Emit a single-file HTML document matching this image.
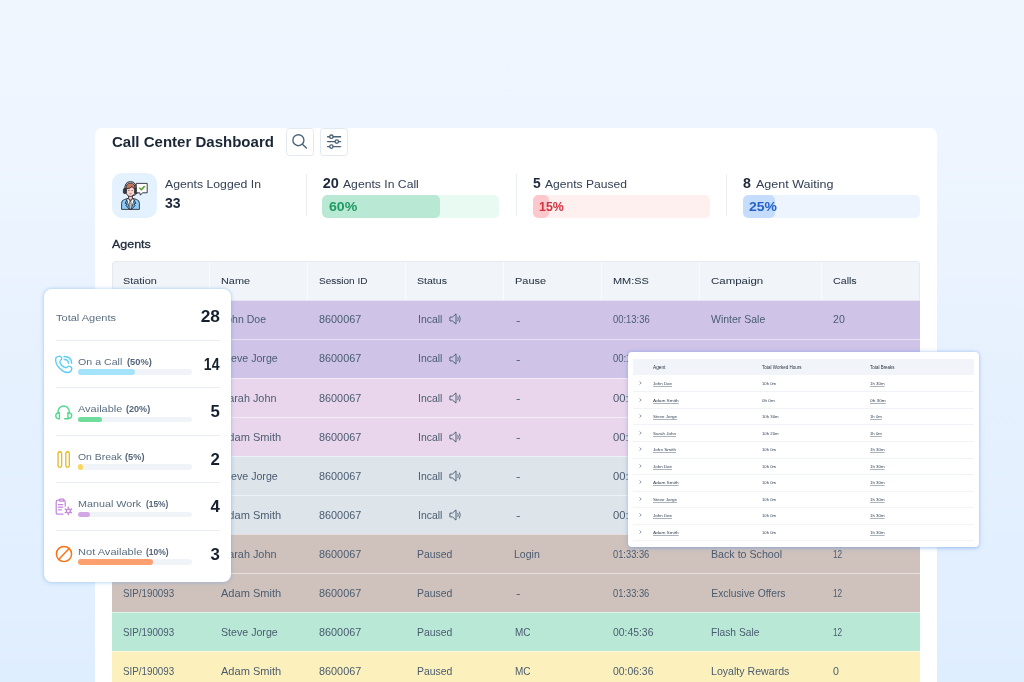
<!DOCTYPE html>
<html lang="en"><head><meta charset="utf-8"><title>Call Center Dashboard</title>
<style>
*{box-sizing:border-box;margin:0;padding:0}
html,body{width:1024px;height:682px;overflow:hidden}
body{font-family:"Liberation Sans",Arial,sans-serif;background:linear-gradient(180deg,#f0f6fe 0%,#eef5fe 22%,#e6f1fe 55%,#dfeefe 100%);position:relative}
.t{position:absolute;line-height:1;white-space:nowrap}
.abs{position:absolute}
#main{position:absolute;left:95px;top:128px;width:842.3px;height:600px;background:#fff;border-radius:7px 7px 0 0}
.btn{position:absolute;top:128px;width:28px;height:28px;border:1px solid #e3e9f0;border-radius:3.5px;background:#fff}
.vdiv{position:absolute;top:174px;width:1px;height:42px;background:#eaeef3}
.bar{position:absolute;top:195px;width:177px;height:22.5px;border-radius:5px;overflow:hidden}
.bar i{position:absolute;left:0;top:0;bottom:0;border-radius:5px}
#thead{position:absolute;left:112px;top:261px;width:808px;height:39px;background:#f1f5f9;border:1px solid #e5eaf1;border-bottom:none;border-radius:4px 4px 0 0}
.cs{position:absolute;top:262px;width:1.5px;height:38px;background:#fafcfe}
.row{position:absolute;left:112px;width:808px;height:40.5px;border-top:1.2px solid rgba(255,255,255,.5)}
#lcard{position:absolute;left:44px;top:289px;width:187px;height:292.8px;background:#fff;border-radius:7.5px;box-shadow:0 0 3.5px rgba(70,150,225,.42),0 1px 5px rgba(70,150,225,.12)}
.ld{position:absolute;left:56px;width:164px;height:1px;background:#e8edf3}
.pb{position:absolute;left:78px;width:114px;height:5.4px;border-radius:3px;background:#f0f4f8}
.pb i{position:absolute;left:0;top:0;bottom:0;border-radius:3px}
#pop{position:absolute;left:627.8px;top:352.3px;width:351.1px;height:194.6px;background:#fff;border-radius:4px;box-shadow:0 .5px 3.5px rgba(80,140,225,.45),0 1px 6px rgba(80,140,225,.1)}
.ph{position:absolute;left:633px;top:359px;width:341px;height:16px;background:#f1f5f9}
.pl{position:absolute;left:633px;width:341px;height:1px;background:#f0f3f7}
.u{text-decoration:underline;text-decoration-thickness:.5px;text-underline-offset:.5px;text-decoration-color:rgba(51,66,86,.4)}
#wrap{position:absolute;left:0;top:0;width:1024px;height:682px;overflow:hidden;will-change:transform}
</style></head><body><div id="wrap">

<div id="main"></div>
<div class="t" style="left:112.20px;top:134px;font-size:15.1px;color:#1c2736;font-weight:700;transform:scaleX(0.995);transform-origin:left center;">Call Center Dashboard</div>
<div class="btn" style="left:286px"><svg class="abs" style="left:.4px;top:.4px" width="26" height="26" viewBox="0 0 26 26" fill="none" stroke="#4a6274" stroke-width="1.35" stroke-linecap="round"><circle cx="11.4" cy="11.2" r="5.5"/><path d="M15.4 15.2 L19.4 19"/></svg></div>
<div class="btn" style="left:319.5px"><svg class="abs" style="left:0;top:.45px" width="26" height="26" viewBox="0 0 26 26" fill="none" stroke="#4a6274" stroke-width="1.35" stroke-linecap="round"><path d="M6.6 7.7H19.6M6.6 12.6H19.6M6.6 17.6H19.6"/><circle cx="10.4" cy="7.7" r="1.7" fill="#fff"/><circle cx="15.8" cy="12.6" r="1.7" fill="#fff"/><circle cx="10.4" cy="17.6" r="1.7" fill="#fff"/></svg></div>
<div class="abs" style="left:112px;top:172.8px;width:45px;height:45px;border-radius:10px;background:#e3f2fe"></div>
<svg class="abs" style="left:119px;top:179px" width="31" height="32" viewBox="0 0 31 32">
<g stroke="#2b2b33" stroke-width="0.9" stroke-linejoin="round" stroke-linecap="round">
<path d="M2.6 30 V24.2 Q2.6 21.2 5.6 20.4 L9.2 19.4 H13.8 L17.4 20.4 Q20.4 21.2 20.4 24.2 V30 Z" fill="#8ecbfb"/>
<path d="M9.2 19.4 L11.5 22.2 L13.8 19.4 L15.2 21 L12.4 30 H10.6 L7.8 21 Z" fill="#fff"/>
<path d="M11 22.4 H12 L12.5 30 H10.5 Z" fill="#cfd4da" stroke-width="0.6"/>
<path d="M7.6 21.2 L6.2 24.4 L8 25 L7 26.6 L10.2 30 M15.4 21.2 L16.8 24.4 L15 25 L16 26.6 L12.8 30" fill="#5eb3f6"/>
<path d="M9.6 16.2 V19.4 L11.5 21.4 L13.4 19.4 V16.2 Z" fill="#f7cdc4"/>
<path d="M7.2 9.4 Q7.2 5 11.5 5 Q15.8 5 15.8 9.4 V12.6 Q15.8 17.4 11.5 17.4 Q7.2 17.4 7.2 12.6 Z" fill="#fbd5cd"/>
<path d="M7 10 Q6.6 4 11.5 4 Q16.4 4 16 10 Q14 9.4 13.2 7.4 Q11.6 9.6 7 10 Z" fill="#c4775b"/>
<path d="M5.8 11 Q5.2 2.6 11.5 2.6 Q17.8 2.6 17.2 11" fill="none" stroke-width="1"/>
<rect x="4.4" y="9.4" width="2.8" height="5.2" rx="1.3" fill="#3a3a42"/>
<rect x="15.8" y="9.4" width="2.8" height="5.2" rx="1.3" fill="#3a3a42"/>
<path d="M17.4 14.6 Q17.2 16.8 13.6 16.6" fill="none" stroke-width="0.8"/>
<path d="M17.6 4.4 H28.2 V13.8 H23.4 L21.4 16.2 L20.8 13.8 H17.6 Z" fill="#fff"/>
</g>
<path d="M20.9 9.2 L22.4 10.7 L25.2 7.6" fill="none" stroke="#5a9e2f" stroke-width="1.6" stroke-linecap="round" stroke-linejoin="round"/>
<circle cx="9.9" cy="11.6" r=".5" fill="#2b2b33"/><circle cx="13.1" cy="11.6" r=".5" fill="#2b2b33"/>
<path d="M10.6 14.4 Q11.5 15.2 12.4 14.4" fill="none" stroke="#2b2b33" stroke-width=".6"/>
</svg>
<div class="t" style="left:165.40px;top:178px;font-size:11.7px;color:#334155;transform:scaleX(1.047);transform-origin:left center;">Agents Logged In</div>
<div class="t" style="left:164.80px;top:196px;font-size:14.3px;color:#1e293b;font-weight:700;transform:scaleX(0.981);transform-origin:left center;">33</div>
<div class="vdiv" style="left:305.8px"></div>
<div class="t" style="left:322.80px;top:176px;font-size:14.5px;color:#1e293b;font-weight:700;">20</div>
<div class="t" style="left:343.20px;top:178px;font-size:11.7px;color:#334155;transform:scaleX(1.042);transform-origin:left center;">Agents In Call</div>
<div class="bar" style="left:322.4px;background:#e9faf3"><i style="width:118px;background:#b9e8d4"></i></div>
<div class="t" style="left:328.70px;top:200px;font-size:13.4px;color:#1f9a62;font-weight:700;transform:scaleX(1.055);transform-origin:left center;">60%</div>
<div class="vdiv" style="left:516.0px"></div>
<div class="t" style="left:533.00px;top:176px;font-size:14.5px;color:#1e293b;font-weight:700;transform:scaleX(0.955);transform-origin:left center;">5</div>
<div class="t" style="left:545.30px;top:178px;font-size:11.7px;color:#334155;transform:scaleX(1.035);transform-origin:left center;">Agents Paused</div>
<div class="bar" style="left:532.6px;background:#fff0f0"><i style="width:16px;background:#fdc8cb"></i></div>
<div class="t" style="left:538.90px;top:200px;font-size:13.4px;color:#d3343f;font-weight:700;transform:scaleX(0.925);transform-origin:left center;">15%</div>
<div class="vdiv" style="left:726.4px"></div>
<div class="t" style="left:743.40px;top:176px;font-size:14.5px;color:#1e293b;font-weight:700;transform:scaleX(0.980);transform-origin:left center;">8</div>
<div class="t" style="left:755.90px;top:178px;font-size:11.7px;color:#334155;transform:scaleX(1.072);transform-origin:left center;">Agent Waiting</div>
<div class="bar" style="left:743.0px;background:#edf4fe"><i style="width:31.7px;background:#c5dcfc"></i></div>
<div class="t" style="left:749.30px;top:200px;font-size:13.4px;color:#2563c9;font-weight:700;transform:scaleX(1.041);transform-origin:left center;">25%</div>
<div class="t" style="left:112.40px;top:238px;font-size:11.6px;color:#1e293b;transform:scaleX(1.074);transform-origin:left center;-webkit-text-stroke:.3px #1e293b;">Agents</div>
<div id="thead"></div>
<div class="cs" style="left:208.8px"></div>
<div class="cs" style="left:306.8px"></div>
<div class="cs" style="left:404.8px"></div>
<div class="cs" style="left:502.8px"></div>
<div class="cs" style="left:600.8px"></div>
<div class="cs" style="left:698.8px"></div>
<div class="cs" style="left:820.8px"></div>
<div class="t" style="left:123.30px;top:276px;font-size:9.7px;color:#2b3848;transform:scaleX(1.118);transform-origin:left center;-webkit-text-stroke:.06px #2b3848;">Station</div>
<div class="t" style="left:221.30px;top:276px;font-size:9.7px;color:#2b3848;transform:scaleX(1.121);transform-origin:left center;-webkit-text-stroke:.06px #2b3848;">Name</div>
<div class="t" style="left:319.30px;top:276px;font-size:9.7px;color:#2b3848;transform:scaleX(1.034);transform-origin:left center;-webkit-text-stroke:.06px #2b3848;">Session ID</div>
<div class="t" style="left:417.30px;top:276px;font-size:9.7px;color:#2b3848;transform:scaleX(1.091);transform-origin:left center;-webkit-text-stroke:.06px #2b3848;">Status</div>
<div class="t" style="left:515.30px;top:276px;font-size:9.7px;color:#2b3848;transform:scaleX(1.130);transform-origin:left center;-webkit-text-stroke:.06px #2b3848;">Pause</div>
<div class="t" style="left:613.30px;top:276px;font-size:9.7px;color:#2b3848;transform:scaleX(1.130);transform-origin:left center;-webkit-text-stroke:.06px #2b3848;">MM:SS</div>
<div class="t" style="left:711.30px;top:276px;font-size:9.7px;color:#2b3848;transform:scaleX(1.182);transform-origin:left center;-webkit-text-stroke:.06px #2b3848;">Campaign</div>
<div class="t" style="left:833.30px;top:276px;font-size:9.7px;color:#2b3848;transform:scaleX(1.101);transform-origin:left center;-webkit-text-stroke:.06px #2b3848;">Calls</div>
<div class="row" style="top:299.9px;background:#cfc4e8"></div>
<div class="t" style="left:123.30px;top:315px;font-size:10.3px;color:#4a5c70;transform:scaleX(0.951);transform-origin:left center;">SIP/190093</div>
<div class="t" style="left:221.30px;top:315px;font-size:10.3px;color:#4a5c70;transform:scaleX(1.021);transform-origin:left center;">John Doe</div>
<div class="t" style="left:319.30px;top:315px;font-size:10.3px;color:#4a5c70;transform:scaleX(1.054);transform-origin:left center;">8600067</div>
<div class="t" style="left:417.70px;top:315px;font-size:10.3px;color:#4a5c70;transform:scaleX(1.015);transform-origin:left center;">Incall</div>
<svg class="abs" style="left:448.8px;top:313.4px" width="13" height="12" viewBox="0 0 13 12" fill="none" stroke="#4f6378" stroke-width="1" stroke-linejoin="round" stroke-linecap="round"><path d="M1.3 4.1H3.4L7 .9V11.1L3.4 7.9H1.3Z"/><path d="M8.9 4.2Q9.8 6 8.9 7.8" stroke-width=".9"/><path d="M10.5 2.9Q12.2 6 10.5 9.1" stroke-width=".9"/></svg>
<div class="t" style="left:515.60px;top:316px;font-size:10.3px;color:#4a5c70;transform:scaleX(1.300);transform-origin:left center;">-</div>
<div class="t" style="left:613.30px;top:315px;font-size:10.3px;color:#4a5c70;transform:scaleX(0.915);transform-origin:left center;">00:13:36</div>
<div class="t" style="left:711.30px;top:315px;font-size:10.3px;color:#4a5c70;transform:scaleX(1.019);transform-origin:left center;">Winter Sale</div>
<div class="t" style="left:833.30px;top:315px;font-size:10.3px;color:#4a5c70;transform:scaleX(1.030);transform-origin:left center;">20</div>
<div class="row" style="top:338.9px;background:#cfc4e8"></div>
<div class="t" style="left:123.30px;top:354px;font-size:10.3px;color:#4a5c70;transform:scaleX(0.951);transform-origin:left center;">SIP/190093</div>
<div class="t" style="left:221.30px;top:354px;font-size:10.3px;color:#4a5c70;transform:scaleX(1.032);transform-origin:left center;">Steve Jorge</div>
<div class="t" style="left:319.30px;top:354px;font-size:10.3px;color:#4a5c70;transform:scaleX(1.054);transform-origin:left center;">8600067</div>
<div class="t" style="left:417.70px;top:354px;font-size:10.3px;color:#4a5c70;transform:scaleX(1.015);transform-origin:left center;">Incall</div>
<svg class="abs" style="left:448.8px;top:352.5px" width="13" height="12" viewBox="0 0 13 12" fill="none" stroke="#4f6378" stroke-width="1" stroke-linejoin="round" stroke-linecap="round"><path d="M1.3 4.1H3.4L7 .9V11.1L3.4 7.9H1.3Z"/><path d="M8.9 4.2Q9.8 6 8.9 7.8" stroke-width=".9"/><path d="M10.5 2.9Q12.2 6 10.5 9.1" stroke-width=".9"/></svg>
<div class="t" style="left:515.60px;top:355px;font-size:10.3px;color:#4a5c70;transform:scaleX(1.300);transform-origin:left center;">-</div>
<div class="t" style="left:613.30px;top:354px;font-size:10.3px;color:#4a5c70;transform:scaleX(0.915);transform-origin:left center;">00:13:36</div>
<div class="t" style="left:711.30px;top:354px;font-size:10.3px;color:#4a5c70;transform:scaleX(1.090);transform-origin:left center;">Summer Savings</div>
<div class="t" style="left:833.30px;top:354px;font-size:10.3px;color:#4a5c70;transform:scaleX(1.090);transform-origin:left center;">18</div>
<div class="row" style="top:378.0px;background:#ead6ec"></div>
<div class="t" style="left:123.30px;top:394px;font-size:10.3px;color:#4a5c70;transform:scaleX(0.951);transform-origin:left center;">SIP/190093</div>
<div class="t" style="left:221.30px;top:394px;font-size:10.3px;color:#4a5c70;transform:scaleX(1.053);transform-origin:left center;">Sarah John</div>
<div class="t" style="left:319.30px;top:394px;font-size:10.3px;color:#4a5c70;transform:scaleX(1.054);transform-origin:left center;">8600067</div>
<div class="t" style="left:417.70px;top:394px;font-size:10.3px;color:#4a5c70;transform:scaleX(1.015);transform-origin:left center;">Incall</div>
<svg class="abs" style="left:448.8px;top:391.6px" width="13" height="12" viewBox="0 0 13 12" fill="none" stroke="#4f6378" stroke-width="1" stroke-linejoin="round" stroke-linecap="round"><path d="M1.3 4.1H3.4L7 .9V11.1L3.4 7.9H1.3Z"/><path d="M8.9 4.2Q9.8 6 8.9 7.8" stroke-width=".9"/><path d="M10.5 2.9Q12.2 6 10.5 9.1" stroke-width=".9"/></svg>
<div class="t" style="left:515.60px;top:394px;font-size:10.3px;color:#4a5c70;transform:scaleX(1.300);transform-origin:left center;">-</div>
<div class="t" style="left:613.30px;top:394px;font-size:10.3px;color:#4a5c70;transform:scaleX(1.090);transform-origin:left center;">00:10:12</div>
<div class="t" style="left:711.30px;top:394px;font-size:10.3px;color:#4a5c70;transform:scaleX(1.090);transform-origin:left center;">Holiday Specials</div>
<div class="t" style="left:833.30px;top:394px;font-size:10.3px;color:#4a5c70;transform:scaleX(1.090);transform-origin:left center;">15</div>
<div class="row" style="top:417.0px;background:#ead6ec"></div>
<div class="t" style="left:123.30px;top:433px;font-size:10.3px;color:#4a5c70;transform:scaleX(0.951);transform-origin:left center;">SIP/190093</div>
<div class="t" style="left:221.30px;top:433px;font-size:10.3px;color:#4a5c70;transform:scaleX(1.073);transform-origin:left center;">Adam Smith</div>
<div class="t" style="left:319.30px;top:433px;font-size:10.3px;color:#4a5c70;transform:scaleX(1.054);transform-origin:left center;">8600067</div>
<div class="t" style="left:417.70px;top:433px;font-size:10.3px;color:#4a5c70;transform:scaleX(1.015);transform-origin:left center;">Incall</div>
<svg class="abs" style="left:448.8px;top:430.7px" width="13" height="12" viewBox="0 0 13 12" fill="none" stroke="#4f6378" stroke-width="1" stroke-linejoin="round" stroke-linecap="round"><path d="M1.3 4.1H3.4L7 .9V11.1L3.4 7.9H1.3Z"/><path d="M8.9 4.2Q9.8 6 8.9 7.8" stroke-width=".9"/><path d="M10.5 2.9Q12.2 6 10.5 9.1" stroke-width=".9"/></svg>
<div class="t" style="left:515.60px;top:433px;font-size:10.3px;color:#4a5c70;transform:scaleX(1.300);transform-origin:left center;">-</div>
<div class="t" style="left:613.30px;top:433px;font-size:10.3px;color:#4a5c70;transform:scaleX(1.090);transform-origin:left center;">00:09:45</div>
<div class="t" style="left:711.30px;top:433px;font-size:10.3px;color:#4a5c70;transform:scaleX(1.090);transform-origin:left center;">Spring Promo</div>
<div class="t" style="left:833.30px;top:433px;font-size:10.3px;color:#4a5c70;transform:scaleX(1.090);transform-origin:left center;">14</div>
<div class="row" style="top:456.1px;background:#dde4ea"></div>
<div class="t" style="left:123.30px;top:472px;font-size:10.3px;color:#4a5c70;transform:scaleX(0.951);transform-origin:left center;">SIP/190093</div>
<div class="t" style="left:221.30px;top:472px;font-size:10.3px;color:#4a5c70;transform:scaleX(1.032);transform-origin:left center;">Steve Jorge</div>
<div class="t" style="left:319.30px;top:472px;font-size:10.3px;color:#4a5c70;transform:scaleX(1.054);transform-origin:left center;">8600067</div>
<div class="t" style="left:417.70px;top:472px;font-size:10.3px;color:#4a5c70;transform:scaleX(1.015);transform-origin:left center;">Incall</div>
<svg class="abs" style="left:448.8px;top:469.8px" width="13" height="12" viewBox="0 0 13 12" fill="none" stroke="#4f6378" stroke-width="1" stroke-linejoin="round" stroke-linecap="round"><path d="M1.3 4.1H3.4L7 .9V11.1L3.4 7.9H1.3Z"/><path d="M8.9 4.2Q9.8 6 8.9 7.8" stroke-width=".9"/><path d="M10.5 2.9Q12.2 6 10.5 9.1" stroke-width=".9"/></svg>
<div class="t" style="left:515.60px;top:472px;font-size:10.3px;color:#4a5c70;transform:scaleX(1.300);transform-origin:left center;">-</div>
<div class="t" style="left:613.30px;top:472px;font-size:10.3px;color:#4a5c70;transform:scaleX(1.090);transform-origin:left center;">00:08:20</div>
<div class="t" style="left:711.30px;top:472px;font-size:10.3px;color:#4a5c70;transform:scaleX(1.090);transform-origin:left center;">Clearance Event</div>
<div class="t" style="left:833.30px;top:472px;font-size:10.3px;color:#4a5c70;transform:scaleX(1.090);transform-origin:left center;">13</div>
<div class="row" style="top:495.1px;background:#dde4ea"></div>
<div class="t" style="left:123.30px;top:511px;font-size:10.3px;color:#4a5c70;transform:scaleX(0.951);transform-origin:left center;">SIP/190093</div>
<div class="t" style="left:221.30px;top:511px;font-size:10.3px;color:#4a5c70;transform:scaleX(1.073);transform-origin:left center;">Adam Smith</div>
<div class="t" style="left:319.30px;top:511px;font-size:10.3px;color:#4a5c70;transform:scaleX(1.054);transform-origin:left center;">8600067</div>
<div class="t" style="left:417.70px;top:511px;font-size:10.3px;color:#4a5c70;transform:scaleX(1.015);transform-origin:left center;">Incall</div>
<svg class="abs" style="left:448.8px;top:508.9px" width="13" height="12" viewBox="0 0 13 12" fill="none" stroke="#4f6378" stroke-width="1" stroke-linejoin="round" stroke-linecap="round"><path d="M1.3 4.1H3.4L7 .9V11.1L3.4 7.9H1.3Z"/><path d="M8.9 4.2Q9.8 6 8.9 7.8" stroke-width=".9"/><path d="M10.5 2.9Q12.2 6 10.5 9.1" stroke-width=".9"/></svg>
<div class="t" style="left:515.60px;top:511px;font-size:10.3px;color:#4a5c70;transform:scaleX(1.300);transform-origin:left center;">-</div>
<div class="t" style="left:613.30px;top:511px;font-size:10.3px;color:#4a5c70;transform:scaleX(1.090);transform-origin:left center;">00:07:02</div>
<div class="t" style="left:711.30px;top:511px;font-size:10.3px;color:#4a5c70;transform:scaleX(1.090);transform-origin:left center;">New Arrivals</div>
<div class="t" style="left:833.00px;top:511px;font-size:10.3px;color:#4a5c70;transform:scaleX(0.803);transform-origin:left center;">12</div>
<div class="row" style="top:534.2px;background:#cfc2bd"></div>
<div class="t" style="left:123.30px;top:550px;font-size:10.3px;color:#4a5c70;transform:scaleX(0.951);transform-origin:left center;">SIP/190093</div>
<div class="t" style="left:221.30px;top:550px;font-size:10.3px;color:#4a5c70;transform:scaleX(1.053);transform-origin:left center;">Sarah John</div>
<div class="t" style="left:319.30px;top:550px;font-size:10.3px;color:#4a5c70;transform:scaleX(1.054);transform-origin:left center;">8600067</div>
<div class="t" style="left:416.90px;top:550px;font-size:10.3px;color:#4a5c70;transform:scaleX(1.013);transform-origin:left center;">Paused</div>
<div class="t" style="left:514.30px;top:550px;font-size:10.3px;color:#4a5c70;transform:scaleX(1.024);transform-origin:left center;">Login</div>
<div class="t" style="left:613.30px;top:550px;font-size:10.3px;color:#4a5c70;transform:scaleX(0.905);transform-origin:left center;">01:33:36</div>
<div class="t" style="left:711.30px;top:550px;font-size:10.3px;color:#4a5c70;transform:scaleX(1.035);transform-origin:left center;">Back to School</div>
<div class="t" style="left:833.00px;top:550px;font-size:10.3px;color:#4a5c70;transform:scaleX(0.803);transform-origin:left center;">12</div>
<div class="row" style="top:573.2px;background:#cfc2bd"></div>
<div class="t" style="left:123.30px;top:589px;font-size:10.3px;color:#4a5c70;transform:scaleX(0.951);transform-origin:left center;">SIP/190093</div>
<div class="t" style="left:221.30px;top:589px;font-size:10.3px;color:#4a5c70;transform:scaleX(1.073);transform-origin:left center;">Adam Smith</div>
<div class="t" style="left:319.30px;top:589px;font-size:10.3px;color:#4a5c70;transform:scaleX(1.054);transform-origin:left center;">8600067</div>
<div class="t" style="left:416.90px;top:589px;font-size:10.3px;color:#4a5c70;transform:scaleX(1.013);transform-origin:left center;">Paused</div>
<div class="t" style="left:515.60px;top:589px;font-size:10.3px;color:#4a5c70;transform:scaleX(1.300);transform-origin:left center;">-</div>
<div class="t" style="left:613.30px;top:589px;font-size:10.3px;color:#4a5c70;transform:scaleX(0.905);transform-origin:left center;">01:33:36</div>
<div class="t" style="left:711.30px;top:589px;font-size:10.3px;color:#4a5c70;">Exclusive Offers</div>
<div class="t" style="left:833.00px;top:589px;font-size:10.3px;color:#4a5c70;transform:scaleX(0.803);transform-origin:left center;">12</div>
<div class="row" style="top:612.3px;background:#b9e8d6"></div>
<div class="t" style="left:123.30px;top:628px;font-size:10.3px;color:#4a5c70;transform:scaleX(0.951);transform-origin:left center;">SIP/190093</div>
<div class="t" style="left:221.30px;top:628px;font-size:10.3px;color:#4a5c70;transform:scaleX(1.032);transform-origin:left center;">Steve Jorge</div>
<div class="t" style="left:319.30px;top:628px;font-size:10.3px;color:#4a5c70;transform:scaleX(1.054);transform-origin:left center;">8600067</div>
<div class="t" style="left:416.90px;top:628px;font-size:10.3px;color:#4a5c70;transform:scaleX(1.013);transform-origin:left center;">Paused</div>
<div class="t" style="left:514.60px;top:628px;font-size:10.3px;color:#4a5c70;transform:scaleX(0.968);transform-origin:left center;">MC</div>
<div class="t" style="left:613.30px;top:628px;font-size:10.3px;color:#4a5c70;transform:scaleX(1.008);transform-origin:left center;">00:45:36</div>
<div class="t" style="left:711.30px;top:628px;font-size:10.3px;color:#4a5c70;transform:scaleX(0.995);transform-origin:left center;">Flash Sale</div>
<div class="t" style="left:833.00px;top:628px;font-size:10.3px;color:#4a5c70;transform:scaleX(0.803);transform-origin:left center;">12</div>
<div class="row" style="top:651.3px;background:#fcf0bd"></div>
<div class="t" style="left:123.30px;top:667px;font-size:10.3px;color:#4a5c70;transform:scaleX(0.951);transform-origin:left center;">SIP/190093</div>
<div class="t" style="left:221.30px;top:667px;font-size:10.3px;color:#4a5c70;transform:scaleX(1.073);transform-origin:left center;">Adam Smith</div>
<div class="t" style="left:319.30px;top:667px;font-size:10.3px;color:#4a5c70;transform:scaleX(1.054);transform-origin:left center;">8600067</div>
<div class="t" style="left:416.90px;top:667px;font-size:10.3px;color:#4a5c70;transform:scaleX(1.013);transform-origin:left center;">Paused</div>
<div class="t" style="left:514.60px;top:667px;font-size:10.3px;color:#4a5c70;transform:scaleX(0.968);transform-origin:left center;">MC</div>
<div class="t" style="left:613.30px;top:667px;font-size:10.3px;color:#4a5c70;transform:scaleX(1.008);transform-origin:left center;">00:06:36</div>
<div class="t" style="left:711.30px;top:667px;font-size:10.3px;color:#4a5c70;transform:scaleX(1.030);transform-origin:left center;">Loyalty Rewards</div>
<div class="t" style="left:833.30px;top:667px;font-size:10.3px;color:#4a5c70;transform:scaleX(1.030);transform-origin:left center;">0</div>
<div id="lcard"></div>
<div class="t" style="left:56.00px;top:313px;font-size:9.7px;color:#5a6e80;transform:scaleX(1.137);transform-origin:left center;">Total Agents</div>
<div class="t" style="right:804.19px;top:308px;font-size:16.2px;color:#16202e;font-weight:700;transform:scaleX(1.071);transform-origin:right center;">28</div>
<div class="ld" style="top:339.5px"></div>
<div class="ld" style="top:387px"></div>
<div class="ld" style="top:434.5px"></div>
<div class="ld" style="top:482px"></div>
<div class="ld" style="top:529.5px"></div>
<svg class="abs" style="left:54px;top:353.9px" width="20" height="20" viewBox="0 0 20 20" fill="none" stroke="#5acef7" stroke-width="1.35" stroke-linecap="round" stroke-linejoin="round"><path d="M4.8 2.3C6.2 2 7.9 3.2 7.7 4.6C7.5 6 5.6 6.6 5.9 8C6.6 10.6 9 13 11.6 13.7C13 14 13.4 12.2 14.6 12.1C16 12 18 13.4 17.8 14.8C17.6 16.2 16.4 18.3 13.6 18.5C11.6 18.6 9.8 17.8 8.3 16.6C6.2 15 4.4 13.5 3.4 11.7C2.4 10 1.8 8.4 1.7 6.8C1.6 5.2 1.7 4.2 2.2 3.5C2.8 2.7 3.8 2.4 4.8 2.3Z"/><path d="M10.2 5.5Q14.2 5.4 14.5 9.2"/><path d="M10.2 2.5Q17.4 2.6 17.7 9.2"/></svg>
<div class="t" style="left:77.80px;top:357px;font-size:9.8px;color:#5a6e80;transform:scaleX(1.085);transform-origin:left center;">On a Call</div>
<div class="t" style="left:126.50px;top:358px;font-size:8.9px;color:#55657a;font-weight:700;transform:scaleX(1.049);transform-origin:left center;">(50%)</div>
<div class="pb" style="top:369.2px"><i style="width:57.4px;background:#a5e3fa"></i></div>
<div class="t" style="right:804.40px;top:357px;font-size:15.7px;color:#16202e;font-weight:700;transform:scaleX(0.894);transform-origin:right center;">14</div>
<svg class="abs" style="left:54px;top:402.1px" width="20" height="20" viewBox="0 0 20 20" fill="none" stroke="#4fd98f" stroke-width="1.4" stroke-linecap="round" stroke-linejoin="round"><path d="M4 10.6V9.65A5.65 5.65 0 0 1 15.3 9.65V10.6"/><path d="M5.4 10.8V16.9C3.2 16.9 1.8 15.6 1.8 13.8C1.8 12 3.2 10.8 5.4 10.8Z"/><path d="M13.9 10.8V16.5C16.2 16.5 17.7 15.4 17.7 13.6C17.7 12 16.2 10.8 13.9 10.8Z"/><path d="M13.9 16.7H10.6"/></svg>
<div class="t" style="left:77.80px;top:404px;font-size:9.8px;color:#5a6e80;transform:scaleX(1.119);transform-origin:left center;">Available</div>
<div class="t" style="left:126.30px;top:405px;font-size:8.9px;color:#55657a;font-weight:700;transform:scaleX(1.023);transform-origin:left center;">(20%)</div>
<div class="pb" style="top:416.7px"><i style="width:24.3px;background:#6edc9a"></i></div>
<div class="t" style="right:804.40px;top:404px;font-size:15.7px;color:#16202e;font-weight:700;transform:scaleX(1.070);transform-origin:right center;">5</div>
<svg class="abs" style="left:54px;top:448.9px" width="20" height="21" viewBox="0 0 20 21" fill="none" stroke="#e9b81a" stroke-width="1.3"><rect x="4.05" y="2.75" width="3.6" height="15.6" rx="1.8"/><rect x="11.8" y="2.75" width="3.5" height="15.6" rx="1.75"/></svg>
<div class="t" style="left:77.80px;top:452px;font-size:9.8px;color:#5a6e80;transform:scaleX(1.065);transform-origin:left center;">On Break</div>
<div class="t" style="left:125.20px;top:453px;font-size:8.9px;color:#55657a;font-weight:700;transform:scaleX(1.038);transform-origin:left center;">(5%)</div>
<div class="pb" style="top:464.2px"><i style="width:5.3px;background:#f7d860"></i></div>
<div class="t" style="right:804.40px;top:452px;font-size:15.7px;color:#16202e;font-weight:700;transform:scaleX(1.070);transform-origin:right center;">2</div>
<svg class="abs" style="left:54px;top:496.4px" width="20" height="21" viewBox="0 0 20 21" fill="none" stroke="#c487da" stroke-width="1.25" stroke-linecap="round" stroke-linejoin="round"><path d="M9 18.2 H4 Q2.2 18.2 2.2 16.4 V6 Q2.2 4.2 4 4.2 H5.6 M9.8 4.2 H9.6 Q11.2 4.2 11.2 6 V10.2"/><path d="M5.7 3.2 H9.7 V5.1 H5.7 Z"/><path d="M4.5 8.6 H8.8 M4.5 11.2 H8.8 M4.5 13.8 H7.4"/><circle cx="14.4" cy="14.9" r="1.9"/><path d="M14.4 11.3 V12.5 M14.4 17.3 V18.5 M11.3 13.1 L12.3 13.7 M16.5 16.1 L17.5 16.7 M11.3 16.7 L12.3 16.1 M16.5 13.7 L17.5 13.1" stroke-width="1.5"/></svg>
<div class="t" style="left:77.80px;top:499px;font-size:9.8px;color:#5a6e80;transform:scaleX(1.099);transform-origin:left center;">Manual Work</div>
<div class="t" style="left:145.50px;top:500px;font-size:8.9px;color:#55657a;font-weight:700;transform:scaleX(0.943);transform-origin:left center;">(15%)</div>
<div class="pb" style="top:511.7px"><i style="width:12.3px;background:#d3a6e4"></i></div>
<div class="t" style="right:804.40px;top:499px;font-size:15.7px;color:#16202e;font-weight:700;transform:scaleX(1.070);transform-origin:right center;">4</div>
<svg class="abs" style="left:54px;top:543.9px" width="20" height="20" viewBox="0 0 20 20" fill="none" stroke="#f97316" stroke-width="1.45" stroke-linecap="round"><circle cx="10" cy="10" r="7.6"/><path d="M15.2 4.4 L4.6 15.4"/></svg>
<div class="t" style="left:77.80px;top:547px;font-size:9.8px;color:#5a6e80;transform:scaleX(1.129);transform-origin:left center;">Not Available</div>
<div class="t" style="left:146.00px;top:548px;font-size:8.9px;color:#55657a;font-weight:700;transform:scaleX(0.956);transform-origin:left center;">(10%)</div>
<div class="pb" style="top:559.2px"><i style="width:74.8px;background:#fca070"></i></div>
<div class="t" style="right:804.40px;top:547px;font-size:15.7px;color:#16202e;font-weight:700;transform:scaleX(1.070);transform-origin:right center;">3</div>
<div id="pop"></div><div class="ph"></div>
<div class="t" style="left:652.60px;top:366px;font-size:4.7px;color:#263140;transform:scaleX(1.010);transform-origin:left center;">Agent</div>
<div class="t" style="left:761.60px;top:366px;font-size:4.7px;color:#263140;transform:scaleX(0.961);transform-origin:left center;">Total Worked Hours</div>
<div class="t" style="left:870.40px;top:366px;font-size:4.7px;color:#263140;transform:scaleX(0.951);transform-origin:left center;">Total Breaks</div>
<svg class="abs" style="left:638.6px;top:381.00px" width="3" height="4" viewBox="0 0 3 4" fill="none" stroke="#56667a" stroke-width=".7"><path d="M.7 .5L2.2 2L.7 3.5"/></svg>
<div class="t" style="left:652.60px;top:382px;font-size:4.4px;color:#334256;transform:scaleX(1.014);transform-origin:left center;"><span class="u">John Doe</span></div>
<div class="t" style="left:761.60px;top:382px;font-size:4.4px;color:#334256;transform:scaleX(0.954);transform-origin:left center;">10h 0m</div>
<div class="t" style="left:870.30px;top:382px;font-size:4.4px;color:#334256;transform:scaleX(0.995);transform-origin:left center;"><span class="u">1h 30m</span></div>
<div class="pl" style="top:391.40px"></div>
<svg class="abs" style="left:638.6px;top:397.53px" width="3" height="4" viewBox="0 0 3 4" fill="none" stroke="#56667a" stroke-width=".7"><path d="M.7 .5L2.2 2L.7 3.5"/></svg>
<div class="t" style="left:652.60px;top:399px;font-size:4.4px;color:#334256;transform:scaleX(1.073);transform-origin:left center;"><span class="u">Adam Smith</span></div>
<div class="t" style="left:761.60px;top:399px;font-size:4.4px;color:#334256;transform:scaleX(1.039);transform-origin:left center;">0h 0m</div>
<div class="t" style="left:870.30px;top:399px;font-size:4.4px;color:#334256;transform:scaleX(1.077);transform-origin:left center;"><span class="u">0h 30m</span></div>
<div class="pl" style="top:407.93px"></div>
<svg class="abs" style="left:638.6px;top:414.06px" width="3" height="4" viewBox="0 0 3 4" fill="none" stroke="#56667a" stroke-width=".7"><path d="M.7 .5L2.2 2L.7 3.5"/></svg>
<div class="t" style="left:652.60px;top:415px;font-size:4.4px;color:#334256;transform:scaleX(1.022);transform-origin:left center;"><span class="u">Steve Jorge</span></div>
<div class="t" style="left:761.60px;top:415px;font-size:4.4px;color:#334256;transform:scaleX(0.969);transform-origin:left center;">10h 30m</div>
<div class="t" style="left:870.30px;top:415px;font-size:4.4px;color:#334256;transform:scaleX(0.965);transform-origin:left center;"><span class="u">1h 0m</span></div>
<div class="pl" style="top:424.46px"></div>
<svg class="abs" style="left:638.6px;top:430.59px" width="3" height="4" viewBox="0 0 3 4" fill="none" stroke="#56667a" stroke-width=".7"><path d="M.7 .5L2.2 2L.7 3.5"/></svg>
<div class="t" style="left:652.60px;top:432px;font-size:4.4px;color:#334256;transform:scaleX(1.022);transform-origin:left center;"><span class="u">Sarah John</span></div>
<div class="t" style="left:761.60px;top:432px;font-size:4.4px;color:#334256;transform:scaleX(0.969);transform-origin:left center;">10h 20m</div>
<div class="t" style="left:870.30px;top:432px;font-size:4.4px;color:#334256;transform:scaleX(0.965);transform-origin:left center;"><span class="u">1h 0m</span></div>
<div class="pl" style="top:440.99px"></div>
<svg class="abs" style="left:638.6px;top:447.12px" width="3" height="4" viewBox="0 0 3 4" fill="none" stroke="#56667a" stroke-width=".7"><path d="M.7 .5L2.2 2L.7 3.5"/></svg>
<div class="t" style="left:652.60px;top:448px;font-size:4.4px;color:#334256;transform:scaleX(1.045);transform-origin:left center;"><span class="u">John Smith</span></div>
<div class="t" style="left:761.60px;top:448px;font-size:4.4px;color:#334256;transform:scaleX(0.954);transform-origin:left center;">10h 0m</div>
<div class="t" style="left:870.30px;top:448px;font-size:4.4px;color:#334256;transform:scaleX(0.995);transform-origin:left center;"><span class="u">1h 30m</span></div>
<div class="pl" style="top:457.52px"></div>
<svg class="abs" style="left:638.6px;top:463.65px" width="3" height="4" viewBox="0 0 3 4" fill="none" stroke="#56667a" stroke-width=".7"><path d="M.7 .5L2.2 2L.7 3.5"/></svg>
<div class="t" style="left:652.60px;top:465px;font-size:4.4px;color:#334256;transform:scaleX(1.014);transform-origin:left center;"><span class="u">John Doe</span></div>
<div class="t" style="left:761.60px;top:465px;font-size:4.4px;color:#334256;transform:scaleX(0.954);transform-origin:left center;">10h 0m</div>
<div class="t" style="left:870.30px;top:465px;font-size:4.4px;color:#334256;transform:scaleX(0.995);transform-origin:left center;"><span class="u">1h 30m</span></div>
<div class="pl" style="top:474.05px"></div>
<svg class="abs" style="left:638.6px;top:480.18px" width="3" height="4" viewBox="0 0 3 4" fill="none" stroke="#56667a" stroke-width=".7"><path d="M.7 .5L2.2 2L.7 3.5"/></svg>
<div class="t" style="left:652.60px;top:481px;font-size:4.4px;color:#334256;transform:scaleX(1.073);transform-origin:left center;"><span class="u">Adam Smith</span></div>
<div class="t" style="left:761.60px;top:481px;font-size:4.4px;color:#334256;transform:scaleX(0.954);transform-origin:left center;">10h 0m</div>
<div class="t" style="left:870.30px;top:481px;font-size:4.4px;color:#334256;transform:scaleX(0.995);transform-origin:left center;"><span class="u">1h 30m</span></div>
<div class="pl" style="top:490.58px"></div>
<svg class="abs" style="left:638.6px;top:496.71px" width="3" height="4" viewBox="0 0 3 4" fill="none" stroke="#56667a" stroke-width=".7"><path d="M.7 .5L2.2 2L.7 3.5"/></svg>
<div class="t" style="left:652.60px;top:498px;font-size:4.4px;color:#334256;transform:scaleX(1.022);transform-origin:left center;"><span class="u">Steve Jorge</span></div>
<div class="t" style="left:761.60px;top:498px;font-size:4.4px;color:#334256;transform:scaleX(0.954);transform-origin:left center;">10h 0m</div>
<div class="t" style="left:870.30px;top:498px;font-size:4.4px;color:#334256;transform:scaleX(0.995);transform-origin:left center;"><span class="u">1h 30m</span></div>
<div class="pl" style="top:507.11px"></div>
<svg class="abs" style="left:638.6px;top:513.24px" width="3" height="4" viewBox="0 0 3 4" fill="none" stroke="#56667a" stroke-width=".7"><path d="M.7 .5L2.2 2L.7 3.5"/></svg>
<div class="t" style="left:652.60px;top:514px;font-size:4.4px;color:#334256;transform:scaleX(1.014);transform-origin:left center;"><span class="u">John Doe</span></div>
<div class="t" style="left:761.60px;top:514px;font-size:4.4px;color:#334256;transform:scaleX(0.954);transform-origin:left center;">10h 0m</div>
<div class="t" style="left:870.30px;top:514px;font-size:4.4px;color:#334256;transform:scaleX(0.995);transform-origin:left center;"><span class="u">1h 30m</span></div>
<div class="pl" style="top:523.64px"></div>
<svg class="abs" style="left:638.6px;top:529.77px" width="3" height="4" viewBox="0 0 3 4" fill="none" stroke="#56667a" stroke-width=".7"><path d="M.7 .5L2.2 2L.7 3.5"/></svg>
<div class="t" style="left:652.60px;top:531px;font-size:4.4px;color:#334256;transform:scaleX(1.073);transform-origin:left center;"><span class="u">Adam Smith</span></div>
<div class="t" style="left:761.60px;top:531px;font-size:4.4px;color:#334256;transform:scaleX(0.954);transform-origin:left center;">10h 0m</div>
<div class="t" style="left:870.30px;top:531px;font-size:4.4px;color:#334256;transform:scaleX(0.995);transform-origin:left center;"><span class="u">1h 30m</span></div>
<div class="pl" style="top:540.17px"></div>
</div></body></html>
